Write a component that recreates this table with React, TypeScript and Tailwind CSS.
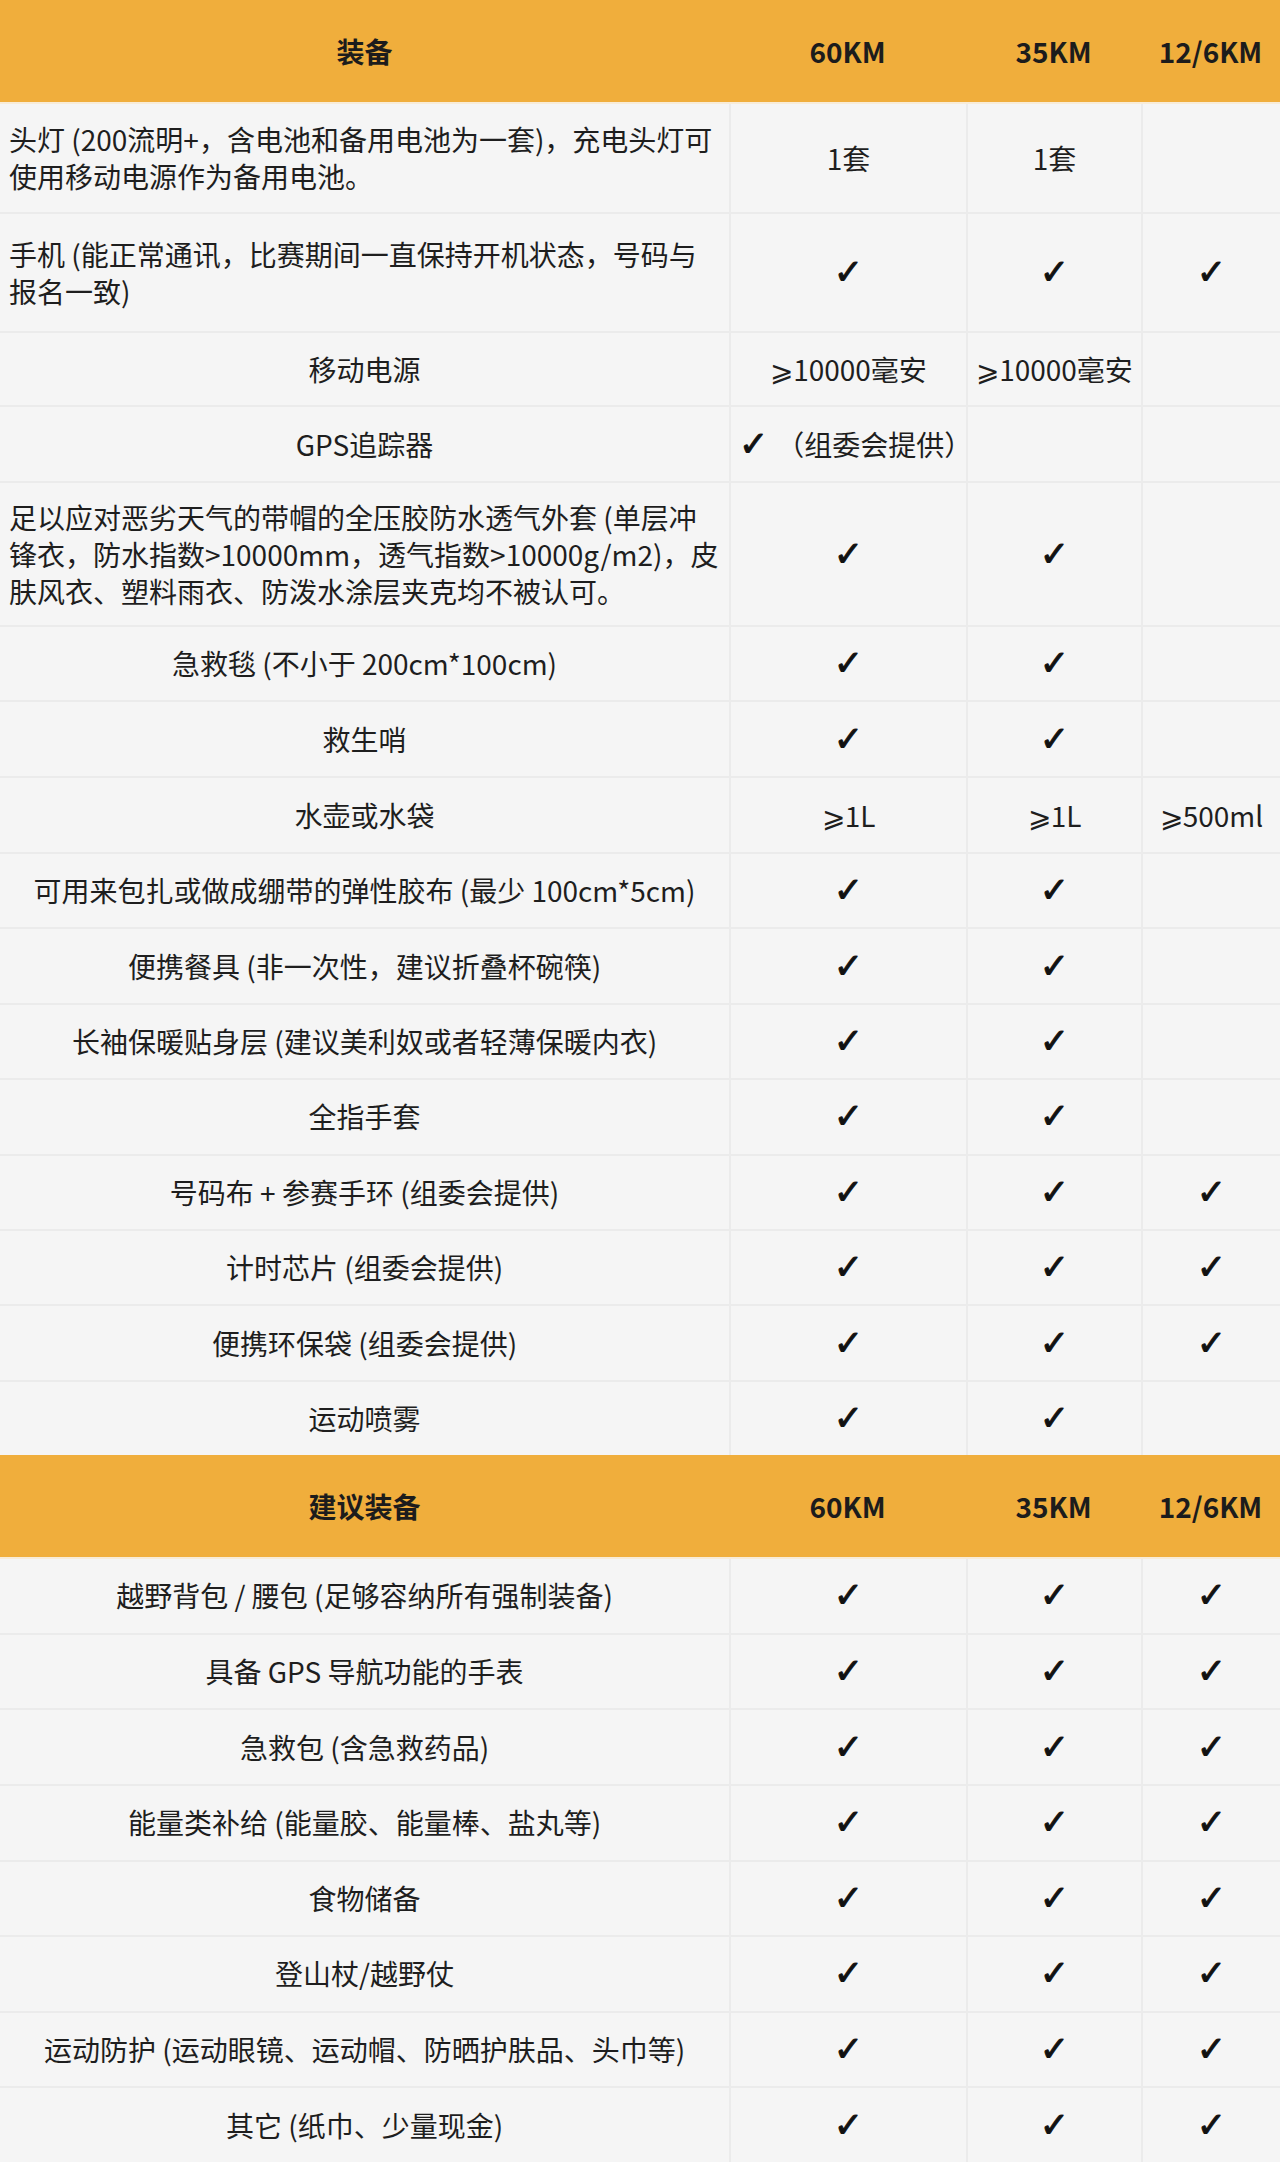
import React from 'react';

type Row = {
    name: string[];
    left?: boolean;
    h: string;
    v: string[];
    gps?: boolean;
};

const C = '✓';

const required: Row[] = [
    { name: ['头灯 (200流明+，含电池和备用电池为一套)，充电头灯可', '使用移动电源作为备用电池。'], left: true, h: 'h-[110px]', v: ['1套', '1套', ''] },
    { name: ['手机 (能正常通讯，比赛期间一直保持开机状态，号码与', '报名一致)'], left: true, h: 'h-[119px]', v: [C, C, C] },
    { name: ['移动电源'], h: 'h-[74px]', v: ['⩾10000毫安', '⩾10000毫安', ''] },
    { name: ['GPS追踪器'], h: 'h-[76px]', v: ['', '', ''], gps: true },
    {
        name: ['足以应对恶劣天气的带帽的全压胶防水透气外套 (单层冲', '锋衣，防水指数>10000mm，透气指数>10000g/m2)，皮', '肤风衣、塑料雨衣、防泼水涂层夹克均不被认可。'],
        left: true,
        h: 'h-[144px]',
        v: [C, C, ''],
    },
    { name: ['急救毯 (不小于 200cm*100cm)'], h: 'h-[75px]', v: [C, C, ''] },
    { name: ['救生哨'], h: 'h-[76px]', v: [C, C, ''] },
    { name: ['水壶或水袋'], h: 'h-[76px]', v: ['⩾1L', '⩾1L', '⩾500ml'] },
    { name: ['可用来包扎或做成绷带的弹性胶布 (最少 100cm*5cm)'], h: 'h-[75.4px]', v: [C, C, ''] },
    { name: ['便携餐具 (非一次性，建议折叠杯碗筷)'], h: 'h-[75.4px]', v: [C, C, ''] },
    { name: ['长袖保暖贴身层 (建议美利奴或者轻薄保暖内衣)'], h: 'h-[75.4px]', v: [C, C, ''] },
    { name: ['全指手套'], h: 'h-[75.4px]', v: [C, C, ''] },
    { name: ['号码布 + 参赛手环 (组委会提供)'], h: 'h-[75.4px]', v: [C, C, C] },
    { name: ['计时芯片 (组委会提供)'], h: 'h-[75.4px]', v: [C, C, C] },
    { name: ['便携环保袋 (组委会提供)'], h: 'h-[75.4px]', v: [C, C, C] },
    { name: ['运动喷雾'], h: 'h-[75.4px]', v: [C, C, ''] },
];

const suggested: Row[] = [
    '越野背包 / 腰包 (足够容纳所有强制装备)',
    '具备 GPS 导航功能的手表',
    '急救包 (含急救药品)',
    '能量类补给 (能量胶、能量棒、盐丸等)',
    '食物储备',
    '登山杖/越野仗',
    '运动防护 (运动眼镜、运动帽、防晒护肤品、头巾等)',
    '其它 (纸巾、少量现金)',
].map(n => ({ name: [n], h: 'h-[75.6px]', v: [C, C, C] }));

const grid = 'grid grid-cols-[729px_237px_175px_139px]';

const Check = () => (
    <span className="font-['DejaVu_Sans',sans-serif] text-[35px] leading-none text-[#111] [-webkit-text-stroke:1px_#111]">✓</span>
);

const Value = ({ text }: { text: string }) => {
    if (text === C) return <Check />;
    return <span>{text}</span>;
};

const Header = ({ title }: { title: string }) => (
    <div className={`${grid} h-[102px] bg-[#f0ae3c] font-bold text-[#1c1c1c] items-center text-center`}>
        <div>{title}</div>
        <div>60KM</div>
        <div>35KM</div>
        <div>12/6KM</div>
    </div>
);

const Body = ({ rows }: { rows: Row[] }) => (
    <div>
        {rows.map((r, i) => (
            <div key={i} className={`${grid} ${r.h} border-t-2 border-[#ebebeb] first:border-[#f8ecd8]`}>
                <div className={`flex items-center px-[9px] leading-[37px] ${r.left ? 'justify-start text-left' : 'justify-center text-center'}`}>
                    <div>
                        {r.name.map((l, j) => (
                            <div key={j} className="whitespace-nowrap">{l}</div>
                        ))}
                    </div>
                </div>
                {r.gps ? (
                    <div className="flex items-center pl-[8px] border-l-2 border-[#ebebeb] whitespace-nowrap">
                        <Check />
                        <span className="ml-[8px]">（组委会提供）</span>
                    </div>
                ) : (
                    <div className="flex items-center justify-center border-l-2 border-[#ebebeb]">
                        <Value text={r.v[0]} />
                    </div>
                )}
                <div className="flex items-center justify-center border-l-2 border-[#ebebeb]">
                    <Value text={r.v[1]} />
                </div>
                <div className="flex items-center justify-center border-l-2 border-[#ebebeb]">
                    <Value text={r.v[2]} />
                </div>
            </div>
        ))}
    </div>
);

export default function App() {
    return (
        <div className="w-[1280px] h-[2162px] bg-[#f5f5f5] text-[#1e1e1e] text-[28px] font-['Noto_Sans_CJK_SC','Noto_Sans',sans-serif] overflow-hidden">
            <Header title="装备" />
            <Body rows={required} />
            <Header title="建议装备" />
            <Body rows={suggested} />
        </div>
    );
}
